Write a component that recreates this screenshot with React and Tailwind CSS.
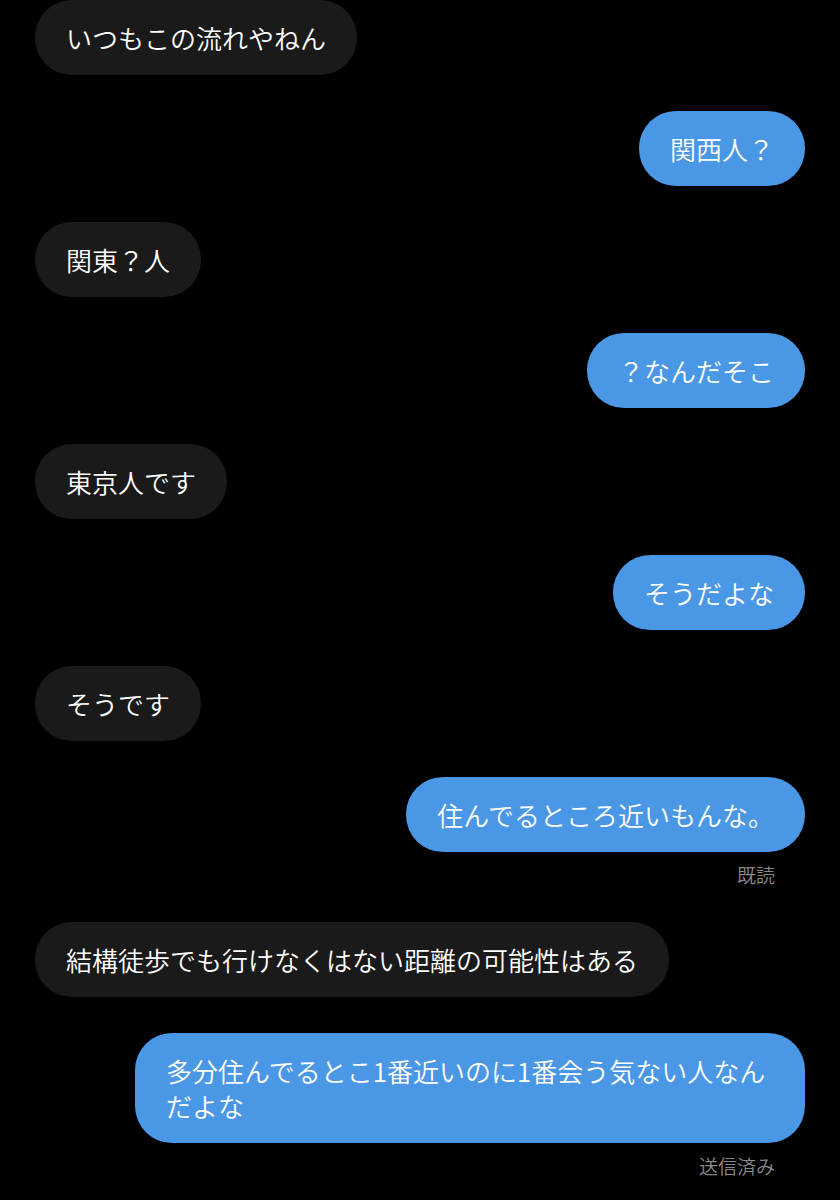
const messages = [
  { id: 1, side: 'left', text: 'いつもこの流れやねん' },
  { id: 2, side: 'right', text: '関西人？' },
  { id: 3, side: 'left', text: '関東？人' },
  { id: 4, side: 'right', text: '？なんだそこ' },
  { id: 5, side: 'left', text: '東京人です' },
  { id: 6, side: 'right', text: 'そうだよな' },
  { id: 7, side: 'left', text: 'そうです' },
  { id: 8, side: 'right', text: '住んでるところ近いもんな。', status: '既読' },
  { id: 9, side: 'left', text: '結構徒歩でも行けなくはない距離の可能性はある' },
  { id: 10, side: 'right', text: '多分住んでるとこ1番近いのに1番会う気ない人なんだよな', status: '送信済み' },
];

// Single chat bubble, gray for them and blue for me
const Bubble = ({ msg }) => {
  const mine = msg.side === 'right';
  return (
    <div className={`flex flex-col ${mine ? 'items-end' : 'items-start'}`}>
      <div
        className={`max-w-[670px] rounded-[37px] px-[31px] py-[20px] text-[26px] leading-[35px] font-[350] text-white ${
          mine ? 'bg-[#4a97e6]' : 'bg-[#1a1a1a]'
        }`}
      >
        {msg.text}
      </div>
      {msg.status && (
        <div className="mt-[10px] mr-[30px] text-[19px] leading-[26px] font-[350] text-[#8b8b8b]">{msg.status}</div>
      )}
    </div>
  );
};

const App = () => {
  return (
    <div
      className="w-[840px] h-[1200px] overflow-hidden bg-black px-[35px]"
      style={{ fontFamily: '"Noto Sans CJK JP", "Noto Sans", sans-serif' }}
    >
      <div className="flex flex-col">
        {messages.map((msg, i) => {
          const prev = messages[i - 1];
          const mt = i === 0 ? 'mt-0' : prev.status ? 'mt-[34px]' : 'mt-[36px]';
          return (
            <div key={msg.id} className={mt}>
              <Bubble msg={msg} />
            </div>
          );
        })}
      </div>
    </div>
  );
};

export default App;
